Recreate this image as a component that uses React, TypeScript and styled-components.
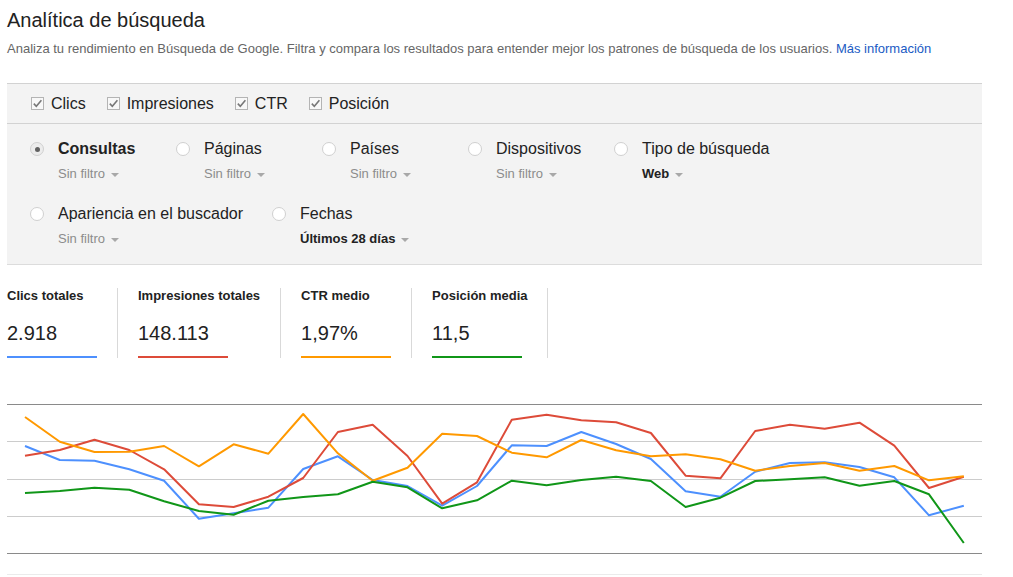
import { FC } from 'react'
import styled, { createGlobalStyle } from 'styled-components'

const GlobalStyle = createGlobalStyle`
  html, body {
    margin: 0;
    padding: 0;
    background: #fff;
    font-family: "Liberation Sans", Arial, sans-serif;
  }
`

interface Metric {
  key: string
  label: string
  total: string
  totalLabel: string
  color: string
  points: number[]
}

const metrics: Metric[] = [
  {
    key: 'clicks',
    label: 'Clics',
    totalLabel: 'Clics totales',
    total: '2.918',
    color: '#4d90fe',
    points: [
      446, 460, 460.7, 469.3, 480.7, 518.7, 513.3, 507.7, 469, 456.3, 480, 486, 505.7, 486, 445.3, 446, 432, 444, 459,
      491.3, 496.7, 471.7, 463, 462.3, 467, 477.3, 515.3, 505.7
    ]
  },
  {
    key: 'impressions',
    label: 'Impresiones',
    totalLabel: 'Impresiones totales',
    total: '148.113',
    color: '#dd4b39',
    points: [
      455.7, 450, 439.7, 450, 469.3, 504.3, 507, 496.7, 478, 432, 424.7, 456, 503.7, 482.3, 419.7, 414.7, 420.3, 422.3,
      433, 475.7, 478.3, 431, 424.7, 428.7, 422.7, 445.7, 488, 476.7
    ]
  },
  {
    key: 'ctr',
    label: 'CTR',
    totalLabel: 'CTR medio',
    total: '1,97%',
    color: '#ff9900',
    points: [
      417, 441.7, 452, 451.7, 446, 466.3, 444.3, 453.7, 414, 453.3, 480.7, 467.7, 433.7, 436, 452.7, 457.3, 440, 450.3,
      456.3, 454.3, 459.3, 470.7, 466, 463, 470.7, 466, 480.3, 476.3
    ]
  },
  {
    key: 'position',
    label: 'Posición',
    totalLabel: 'Posición media',
    total: '11,5',
    color: '#109618',
    points: [
      493, 491, 487.7, 489.7, 501.3, 511, 514.7, 500.7, 497, 494.3, 481.7, 487.3, 508.3, 500.3, 480.7, 485.3, 480, 476.7,
      481, 507, 497.7, 481, 479.3, 477.3, 485.7, 481, 494.3, 543
    ]
  }
]

interface Dimension {
  label: string
  filter: string
  selected?: boolean
  strongFilter?: boolean
}

const dimensions: Dimension[] = [
  { label: 'Consultas', filter: 'Sin filtro', selected: true },
  { label: 'Páginas', filter: 'Sin filtro' },
  { label: 'Países', filter: 'Sin filtro' },
  { label: 'Dispositivos', filter: 'Sin filtro' },
  { label: 'Tipo de búsqueda', filter: 'Web', strongFilter: true },
  { label: 'Apariencia en el buscador', filter: 'Sin filtro' },
  { label: 'Fechas', filter: 'Últimos 28 días', strongFilter: true }
]

// chart geometry, taken from the page coordinates of the original
const CHART_TOP = 400
const CHART_LEFT = 7
const STEP = 34.77
const gridLines = [
  { y: 404, color: '#8a8a8a' },
  { y: 441, color: '#cccccc' },
  { y: 479, color: '#cccccc' },
  { y: 516, color: '#cccccc' },
  { y: 553, color: '#8a8a8a' },
  { y: 574, color: '#ebebeb' }
]

const toPath = (points: number[]) =>
  points
    .map((y, i) => `${i === 0 ? 'M' : 'L'}${(25 + i * STEP - CHART_LEFT).toFixed(1)},${(y - CHART_TOP).toFixed(1)}`)
    .join(' ')

const CheckIcon: FC = () => (
  <svg width="13" height="13" viewBox="0 0 13 13">
    <rect x="0.5" y="0.5" width="12" height="12" fill="#f8f8f8" stroke="#b4b4b4" />
    <path d="M2.8 6.6 L5.3 9.2 L10.4 3.2" fill="none" stroke="#777" strokeWidth="1.6" />
  </svg>
)

const App: FC = () => {
  return (
    <>
      <GlobalStyle />
      <Page>
        <Title>Analítica de búsqueda</Title>
        <Subtitle>
          Analiza tu rendimiento en Búsqueda de Google. Filtra y compara los resultados para entender mejor los patrones
          de búsqueda de los usuarios. <MoreLink href="#">Más información</MoreLink>
        </Subtitle>

        <Panel>
          <MetricsBar>
            {metrics.map((m) => (
              <MetricToggle key={m.key}>
                <CheckIcon />
                {m.label}
              </MetricToggle>
            ))}
          </MetricsBar>
          <DimensionsGrid>
            {dimensions.map((d) => (
              <DimensionItem key={d.label}>
                <Radio $selected={d.selected} />
                <DimensionBody>
                  <DimLabel $selected={d.selected}>{d.label}</DimLabel>
                  <FilterLabel $strong={d.strongFilter}>
                    {d.filter}
                    <Caret />
                  </FilterLabel>
                </DimensionBody>
              </DimensionItem>
            ))}
          </DimensionsGrid>
        </Panel>

        <Stats>
          {metrics.map((m) => (
            <Stat key={m.key}>
              <StatLabel>{m.totalLabel}</StatLabel>
              <StatValue>{m.total}</StatValue>
              <StatBar $color={m.color} />
            </Stat>
          ))}
        </Stats>

        <Chart width="975" height="177" viewBox="0 0 975 177">
          {gridLines.map((g) => (
            <line key={g.y} x1="0" x2="975" y1={g.y - CHART_TOP + 0.5} y2={g.y - CHART_TOP + 0.5} stroke={g.color} />
          ))}
          {metrics.map((m) => (
            <path key={m.key} d={toPath(m.points)} fill="none" stroke={m.color} strokeWidth="2" strokeLinejoin="round" />
          ))}
        </Chart>
      </Page>
    </>
  )
}

const Page = styled.div`
  width: 975px;
  padding: 8px 0 0 7px;
`

const Title = styled.h1`
  margin: 0;
  font-size: 20px;
  line-height: 24px;
  font-weight: normal;
  color: #222;
`

const Subtitle = styled.p`
  margin: 9px 0 0;
  font-size: 13px;
  line-height: 16px;
  color: #666;
`

const MoreLink = styled.a`
  color: #1a5bc4;
  text-decoration: none;
`

const Panel = styled.div`
  margin-top: 26px;
  background: #f3f3f3;
  border-top: 1px solid #d2d2d2;
  border-bottom: 1px solid #dcdcdc;
`

const MetricsBar = styled.div`
  display: flex;
  align-items: center;
  gap: 21px;
  height: 39px;
  padding-left: 24px;
  border-bottom: 1px solid #d2d2d2;
`

const MetricToggle = styled.label`
  display: flex;
  align-items: center;
  gap: 7px;
  font-size: 16px;
  color: #222;
`

const DimensionsGrid = styled.div`
  display: flex;
  flex-wrap: wrap;
  row-gap: 22px;
  padding: 15px 0 17px 23px;
`

const DimensionItem = styled.div`
  display: flex;
  align-items: flex-start;
  min-width: 146px;
  padding-right: 29px;
  box-sizing: border-box;
`

const Radio = styled.span<{ $selected?: boolean }>`
  position: relative;
  flex: none;
  width: 14px;
  height: 14px;
  margin: 3px 14px 0 0;
  box-sizing: border-box;
  border-radius: 50%;
  border: 1px solid #d0d0d0;
  background: ${(p) => (p.$selected ? '#ececec' : '#fff')};

  &::after {
    content: '';
    display: ${(p) => (p.$selected ? 'block' : 'none')};
    position: absolute;
    left: 3.5px;
    top: 3.5px;
    width: 5px;
    height: 5px;
    border-radius: 50%;
    background: #616161;
  }
`

const DimensionBody = styled.div`
  display: flex;
  flex-direction: column;
  gap: 7px;
`

const DimLabel = styled.span<{ $selected?: boolean }>`
  font-size: 16px;
  line-height: 20px;
  color: #222;
  font-weight: ${(p) => (p.$selected ? 'bold' : 'normal')};
  white-space: nowrap;
`

const FilterLabel = styled.span<{ $strong?: boolean }>`
  display: flex;
  align-items: center;
  gap: 6px;
  font-size: 13px;
  line-height: 16px;
  white-space: nowrap;
  color: ${(p) => (p.$strong ? '#222' : '#8c8c8c')};
  font-weight: ${(p) => (p.$strong ? 'bold' : 'normal')};
`

const Caret = styled.span`
  width: 0;
  height: 0;
  margin-top: 1px;
  border-left: 4px solid transparent;
  border-right: 4px solid transparent;
  border-top: 4px solid #a8a8a8;
`

const Stats = styled.div`
  display: flex;
  margin-top: 23px;
`

const Stat = styled.div`
  display: flex;
  flex-direction: column;
  padding: 0 20px;
  border-right: 1px solid #d9d9d9;

  &:first-child {
    padding-left: 0;
  }
`

const StatLabel = styled.span`
  font-size: 13px;
  line-height: 16px;
  font-weight: bold;
  color: #222;
  white-space: nowrap;
`

const StatValue = styled.span`
  margin-top: 17px;
  font-size: 20px;
  line-height: 24px;
  color: #222;
`

const StatBar = styled.span<{ $color: string }>`
  display: block;
  width: 90px;
  height: 2px;
  margin-top: 11px;
  background: ${(p) => p.$color};
`

const Chart = styled.svg`
  display: block;
  margin-top: 42px;
`

export default App
